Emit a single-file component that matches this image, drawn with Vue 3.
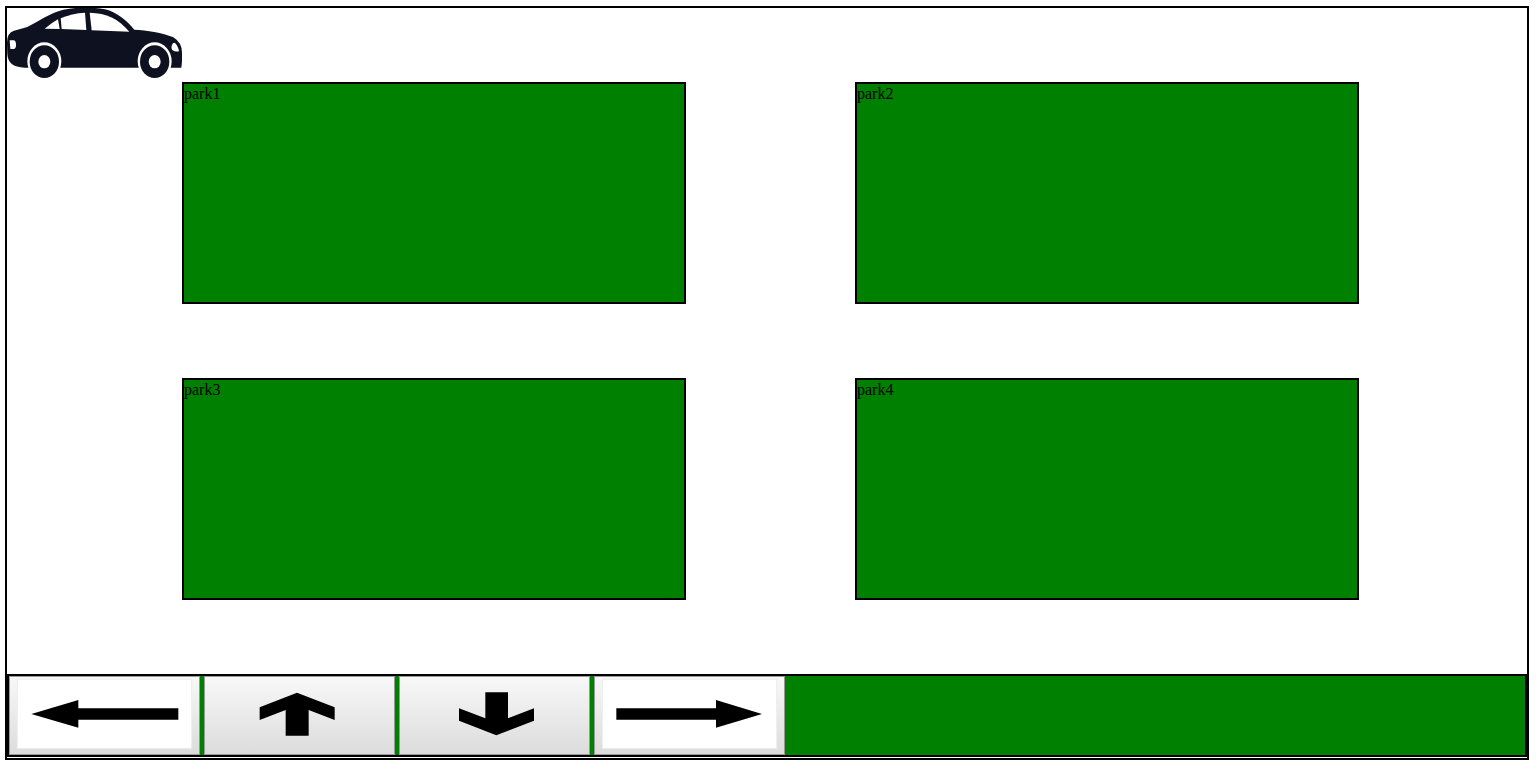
<script setup>
import { ref } from 'vue'

const spots = ['park1', 'park2', 'park3', 'park4']
const step = 10
const car = ref({ x: 0, y: 0 })

const controls = [
  { name: 'Left', dx: -1, dy: 0, plate: 25, points: '67,114 208,72 208,97 508,97 508,131 208,131 208,155' },
  { name: 'Up', dx: 0, dy: -1, points: '279,50 392,94 392,132 314,102 314,179 245,179 245,102 167,132 167,94' },
  { name: 'Down', dx: 0, dy: 1, points: '259,49 327,49 327,127 405,97 405,134 292,178 180,134 180,97 259,127' },
  { name: 'Right', dx: 1, dy: 0, plate: 25, points: '67,97 366,97 366,72 504,114 366,155 366,131 67,131' }
]

function move(control) {
  car.value.x = Math.max(0, car.value.x + control.dx * step)
  car.value.y = Math.max(0, car.value.y + control.dy * step)
}
</script>

<template>
  <main class="lot">
    <svg
      class="car"
      :style="{ left: car.x + 'px', top: car.y + 'px' }"
      viewBox="21 24 525 210"
      role="img"
      aria-label="Car"
    >
      <path
        fill="#0e111f"
        d="M21 128 Q21 98 42 92 Q60 87 82 81 C115 64 150 39 190 29 Q255 17 315 28 C352 37 380 62 403 89 C440 91 487 97 520 112 Q546 128 546 158 Q547 184 544 203 L75 203 C38 202 24 188 22 163 Z"
      />
      <path fill="#fff" d="M134 86 Q154 69 174 58 L179 87 Z" />
      <path fill="#fff" d="M182 55 Q215 40 255 38 L259 90 L185 87 Z" />
      <path fill="#fff" d="M269 38 C320 39 354 56 388 95 L275 91 Z" />
      <path fill="#fff" d="M29 121 H42 Q48 123 48 134 Q48 145 42 147 H31 Z" />
      <path fill="#fff" d="M516 135 Q519 127 525 129 Q534 137 537 154 Q525 156 518 151 Q512 145 516 135 Z" />
      <g v-for="cx in [133, 464]" :key="cx">
        <ellipse :cx="cx" cy="184" rx="51" ry="57" fill="#fff" />
        <ellipse :cx="cx" cy="185" rx="44" ry="49" fill="#0e111f" />
        <ellipse :cx="cx" cy="185" rx="18" ry="20" fill="#fff" />
      </g>
    </svg>

    <section class="spots">
      <div v-for="spot in spots" :key="spot" class="spot">{{ spot }}</div>
    </section>

    <nav class="controls">
      <button
        v-for="control in controls"
        :key="control.name"
        type="button"
        :aria-label="control.name"
        @click="move(control)"
      >
        <svg viewBox="0 0 573 237" aria-hidden="true">
          <rect v-if="control.plate" :x="control.plate" y="10" width="523" height="207" fill="#fff" stroke="#ececec" stroke-width="3" />
          <polygon :points="control.points" />
        </svg>
      </button>
    </nav>
  </main>
</template>

<style>
body {
  margin: 0;
  background: #fff;
}
</style>

<style scoped>
.lot {
  position: relative;
  display: flex;
  flex-direction: column;
  box-sizing: border-box;
  min-height: calc(100vh - 18px);
  margin: 6px 10px 12px 5px;
  padding-bottom: 1px;
  border: 2px solid #000;
  font: 16px/20px "Liberation Serif", "Times New Roman", serif;
  color: #000;
}

.car {
  position: absolute;
  width: 175px;
  height: 70px;
}

.spots {
  flex: 1;
  display: grid;
  grid-template-columns: 1fr 1fr;
  grid-auto-rows: 1fr;
  gap: 74px 169px;
  padding: 74px 168px 74px 175px;
}

.spot {
  border: 2px solid #000;
  background: #008000;
}

.controls {
  display: flex;
  gap: 4px;
  border: 2px solid #000;
  background: #008000;
}

button {
  box-sizing: border-box;
  width: 191px;
  height: 79px;
  padding: 0;
  border: 1px solid #999;
  background: linear-gradient(#f8f8f8, #dcdcdc);
  cursor: pointer;
}

button svg {
  display: block;
  width: 191px;
  height: 79px;
  margin: -1px;
}
</style>
